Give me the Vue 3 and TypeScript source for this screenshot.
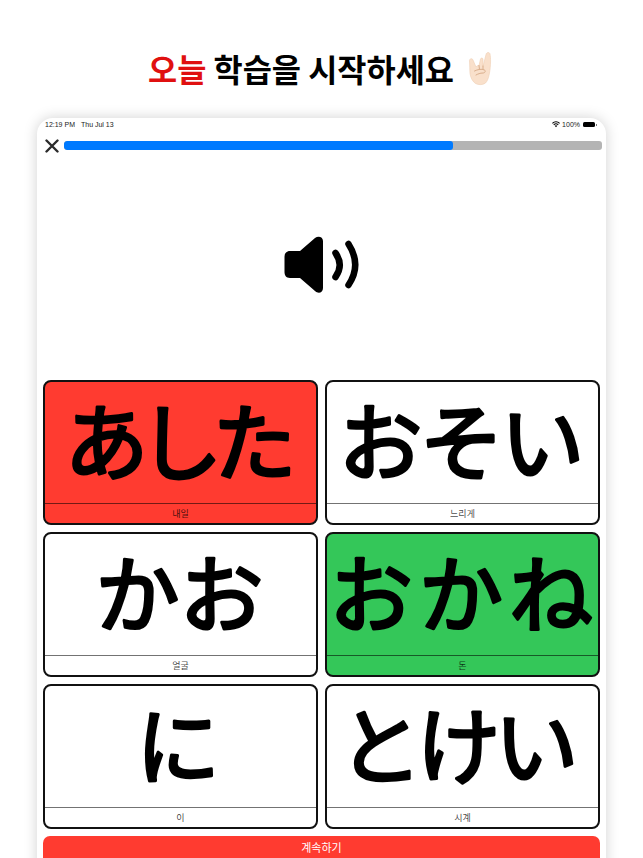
<script setup lang="ts">
interface Card {
  word: string;
  meaning: string;
  spacing: number;
  dx: number;
  state?: 'wrong' | 'right';
}

// spacing, dx: 원본 폰트와 글자 폭이 달라서 단어마다 맞춘 값
const cards: Card[] = [
  { word: 'あした', meaning: '내일', spacing: -10, dx: -5, state: 'wrong' },
  { word: 'おそい', meaning: '느리게', spacing: -3, dx: -2.5 },
  { word: 'かお', meaning: '얼굴', spacing: 0, dx: -1 },
  { word: 'おかね', meaning: '돈', spacing: 6, dx: 1.5, state: 'right' },
  { word: 'に', meaning: '이', spacing: 0, dx: -2.5 },
  { word: 'とけい', meaning: '시계', spacing: -6, dx: -7 },
];
</script>

<template>
  <div class="page">
    <h1 class="title">
      <span class="title-text"><span class="accent">오늘</span> 학습을 시작하세요</span>
      <svg class="hand" viewBox="0 0 36 40" width="36" height="40" aria-hidden="true">
        <path
          d="M7.500 13c-.5-2 2.500-3.500 3.500-1L14 19c.5-1 1.500-1.500 3-1.500L18.500 11c.5-1.500 2.500-1.300 2.500 .5L21 18.500 24 6.500c.5-2.500 3.500-2.500 4-.5.8 3 .8 12-.5 19-1 5-2 8-4 10-2.500 2-7 2.200-10 .5-3-2-5-6-5.500-10C7.500 21 8 17 7.500 13Z"
          fill="#f9e0cb"
          stroke="#efcfb4"
          stroke-width=".6"
        />
        <path d="M12.500 23c3-1.500 7-2.500 10-1 1.500 1 .5 3-1.500 3-3 0-5 1-7 2M17 17.500l.5 4M21 18l0 3.500" fill="none" stroke="#d9ae8c" stroke-width="1" stroke-linecap="round" />
      </svg>
    </h1>

    <div class="device">
      <div class="status-bar">
        <span class="clock">12:19 PM</span>
        <span class="date">Thu Jul 13</span>
        <span class="status-right">
          <svg viewBox="0 0 10 8" width="8" height="7" aria-hidden="true">
            <path d="M5 7.500 3.400 5.700a2.300 2.300 0 0 1 3.200 0ZM2.600 4.900 1.700 3.900a4.800 4.800 0 0 1 6.600 0l-.9 1a3.500 3.500 0 0 0-4.800 0ZM1 3.100 0 2a7.400 7.400 0 0 1 10 0L9 3.100a6 6 0 0 0-8 0Z" fill="#000" />
          </svg>
          <span>100%</span>
          <span class="battery"></span>
        </span>
      </div>

      <div class="top-row">
        <svg class="close" viewBox="0 0 14 14" width="14" height="14" aria-hidden="true">
          <path d="M1.500 1.500 12.500 12.500M12.500 1.500 1.500 12.500" stroke="#2b2b2b" stroke-width="2.400" stroke-linecap="round" />
        </svg>
        <div class="progress">
          <div class="progress-fill" :style="{ width: '72.3%' }"></div>
        </div>
      </div>

      <div class="speaker">
        <svg viewBox="0 0 100 80" width="100" height="80" aria-hidden="true">
          <path d="M20 26H30L45 13C48 10.500 53 11.500 53 16V63C53 68 48 69 45 66L30 53H20C16 53 14.500 50 14.500 47V32C14.500 29 16 26 20 26Z" fill="#000" />
          <path d="M65.500 28Q74 40 65.500 52M78.500 19Q92 40 78.500 60" fill="none" stroke="#000" stroke-width="6.500" stroke-linecap="round" />
        </svg>
      </div>

      <div class="grid">
        <div v-for="card in cards" :key="card.word" class="card" :class="card.state">
          <svg class="word" viewBox="0 0 271 121" width="271" height="121">
            <text :x="135.5 + card.dx" y="92" text-anchor="middle" :style="{ letterSpacing: card.spacing + 'px' }">{{ card.word }}</text>
          </svg>
          <div class="meaning">{{ card.meaning }}</div>
        </div>
      </div>

      <button class="next" type="button">계속하기</button>
    </div>
  </div>
</template>

<style>
html,
body {
  margin: 0;
  background: #fff;
  overflow: hidden;
}
</style>

<style scoped>
.page {
  width: 643px;
  height: 858px;
  overflow: hidden;
  box-sizing: border-box;
  background: #fff;
  font-family: "Liberation Sans", "Noto Sans CJK KR", sans-serif;
}

.title {
  height: 118px;
  margin: 0;
  padding: 18px 0 0 3px;
  box-sizing: border-box;
  display: flex;
  align-items: center;
  justify-content: center;
  gap: 8px;
  white-space: pre;
  font-family: "Noto Sans CJK KR", sans-serif;
  font-size: 31.700px;
  font-weight: 700;
  color: #000;
}

.accent {
  color: #e01010;
}

.device {
  width: 569px;
  margin: 0 auto;
  background: #fff;
  border-radius: 16px 16px 0 0;
  box-shadow: 0 0 14px rgba(0, 0, 0, 0.18);
}

.status-bar {
  height: 19px;
  padding: 0 9px 6px 8px;
  box-sizing: border-box;
  display: flex;
  align-items: center;
  gap: 6px;
  font-size: 7px;
  color: #222;
}

.status-right {
  margin-left: auto;
  display: flex;
  align-items: center;
  gap: 2px;
}

.battery {
  position: relative;
  width: 12px;
  height: 5px;
  background: #000;
  border-radius: 1.500px;
  margin-left: 1px;
  margin-right: 2px;
}

.battery::after {
  content: "";
  position: absolute;
  right: -2px;
  top: 1.500px;
  width: 1px;
  height: 2px;
  background: #777;
}

.top-row {
  height: 17px;
  padding: 0 4px 0 8px;
  display: flex;
  align-items: center;
  gap: 5px;
}

.progress {
  flex: 1;
  height: 9px;
  border-radius: 3px;
  background: #b4b4b4;
  overflow: hidden;
}

.progress-fill {
  height: 100%;
  background: #007aff;
  border-radius: 3px;
}

.speaker {
  height: 226px;
  padding-bottom: 4px;
  box-sizing: border-box;
  display: flex;
  align-items: center;
  justify-content: center;
}

.speaker svg {
  margin-right: 3px;
}

.grid {
  display: grid;
  grid-template-columns: 275px 275px;
  grid-auto-rows: 145px;
  gap: 7px;
  padding: 0 6px;
}

.card {
  display: flex;
  flex-direction: column;
  box-sizing: border-box;
  border: 2px solid #111;
  border-radius: 8px;
  background: #fff;
}

.card.wrong {
  background: #ff3b30;
}

.card.right {
  background: #34c759;
}

.word {
  display: block;
  flex: 1;
  overflow: visible;
}

.word text {
  font-family: "Noto Sans CJK JP", sans-serif;
  font-size: 84px;
  fill: #000;
  stroke: #000;
  stroke-width: 3px;
  stroke-linejoin: round;
  stroke-linecap: round;
}

.meaning {
  height: 19px;
  border-top: 1px solid rgba(0, 0, 0, 0.55);
  display: flex;
  align-items: center;
  justify-content: center;
  font-family: "Noto Sans CJK KR", sans-serif;
  font-size: 9px;
  color: rgba(0, 0, 0, 0.75);
}

.next {
  display: block;
  width: 557px;
  height: 40px;
  margin: 7px 6px 0;
  border: 0;
  border-radius: 7px;
  background: #ff3b30;
  color: #fff;
  font-family: "Noto Sans CJK KR", sans-serif;
  font-size: 11px;
  padding: 0 0 18px;
}
</style>
